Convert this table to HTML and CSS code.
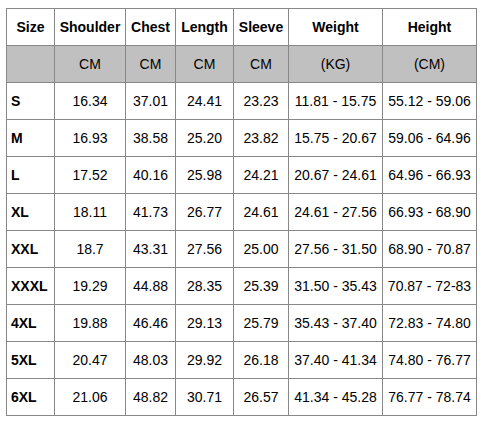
FILE: index.html
```html
<!DOCTYPE html>
<html>
<head>
<meta charset="utf-8">
<link rel="stylesheet" href="styles.css">
</head>
<body>
<table class="size-table">
  <colgroup>
    <col class="c-size">
    <col class="c-shoulder">
    <col class="c-chest">
    <col class="c-length">
    <col class="c-sleeve">
    <col class="c-weight">
    <col class="c-height">
  </colgroup>
  <thead>
    <tr class="head-row">
      <th>Size</th><th>Shoulder</th><th>Chest</th><th>Length</th><th>Sleeve</th><th>Weight</th><th>Height</th>
    </tr>
    <tr class="unit-row">
      <td></td><td>CM</td><td>CM</td><td>CM</td><td>CM</td><td>(KG)</td><td>(CM)</td>
    </tr>
  </thead>
  <tbody>
    <tr><th>S</th><td>16.34</td><td>37.01</td><td>24.41</td><td>23.23</td><td>11.81 - 15.75</td><td>55.12 - 59.06</td></tr>
    <tr><th>M</th><td>16.93</td><td>38.58</td><td>25.20</td><td>23.82</td><td>15.75 - 20.67</td><td>59.06 - 64.96</td></tr>
    <tr><th>L</th><td>17.52</td><td>40.16</td><td>25.98</td><td>24.21</td><td>20.67 - 24.61</td><td>64.96 - 66.93</td></tr>
    <tr><th>XL</th><td>18.11</td><td>41.73</td><td>26.77</td><td>24.61</td><td>24.61 - 27.56</td><td>66.93 - 68.90</td></tr>
    <tr><th>XXL</th><td>18.7</td><td>43.31</td><td>27.56</td><td>25.00</td><td>27.56 - 31.50</td><td>68.90 - 70.87</td></tr>
    <tr><th>XXXL</th><td>19.29</td><td>44.88</td><td>28.35</td><td>25.39</td><td>31.50 - 35.43</td><td>70.87 - 72-83</td></tr>
    <tr><th>4XL</th><td>19.88</td><td>46.46</td><td>29.13</td><td>25.79</td><td>35.43 - 37.40</td><td>72.83 - 74.80</td></tr>
    <tr><th>5XL</th><td>20.47</td><td>48.03</td><td>29.92</td><td>26.18</td><td>37.40 - 41.34</td><td>74.80 - 76.77</td></tr>
    <tr><th>6XL</th><td>21.06</td><td>48.82</td><td>30.71</td><td>26.57</td><td>41.34 - 45.28</td><td>76.77 - 78.74</td></tr>
  </tbody>
</table>
</body>
</html>
```

FILE: styles.css
```css
html, body {
  margin: 0;
  padding: 0;
  background: #ffffff;
}

body {
  padding: 8px 0 0 6px;
  font-family: "Liberation Sans", Arial, sans-serif;
  font-size: 14px;
  color: #000000;
}

.size-table {
  border-collapse: collapse;
  table-layout: fixed;
  width: 471px;
}

.c-size { width: 48px; }
.c-shoulder { width: 71px; }
.c-chest { width: 50px; }
.c-length { width: 58px; }
.c-sleeve { width: 55px; }
.c-weight { width: 94px; }
.c-height { width: 94px; }

.size-table th,
.size-table td {
  border: 1px solid #888888;
  height: 37px;
  padding: 0 4px;
  box-sizing: border-box;
  text-align: center;
  vertical-align: middle;
  white-space: nowrap;
  font-weight: normal;
}

.size-table th {
  font-weight: bold;
}

.size-table tbody th {
  text-align: left;
}

.unit-row td {
  background: #c0c0c0;
}
```
